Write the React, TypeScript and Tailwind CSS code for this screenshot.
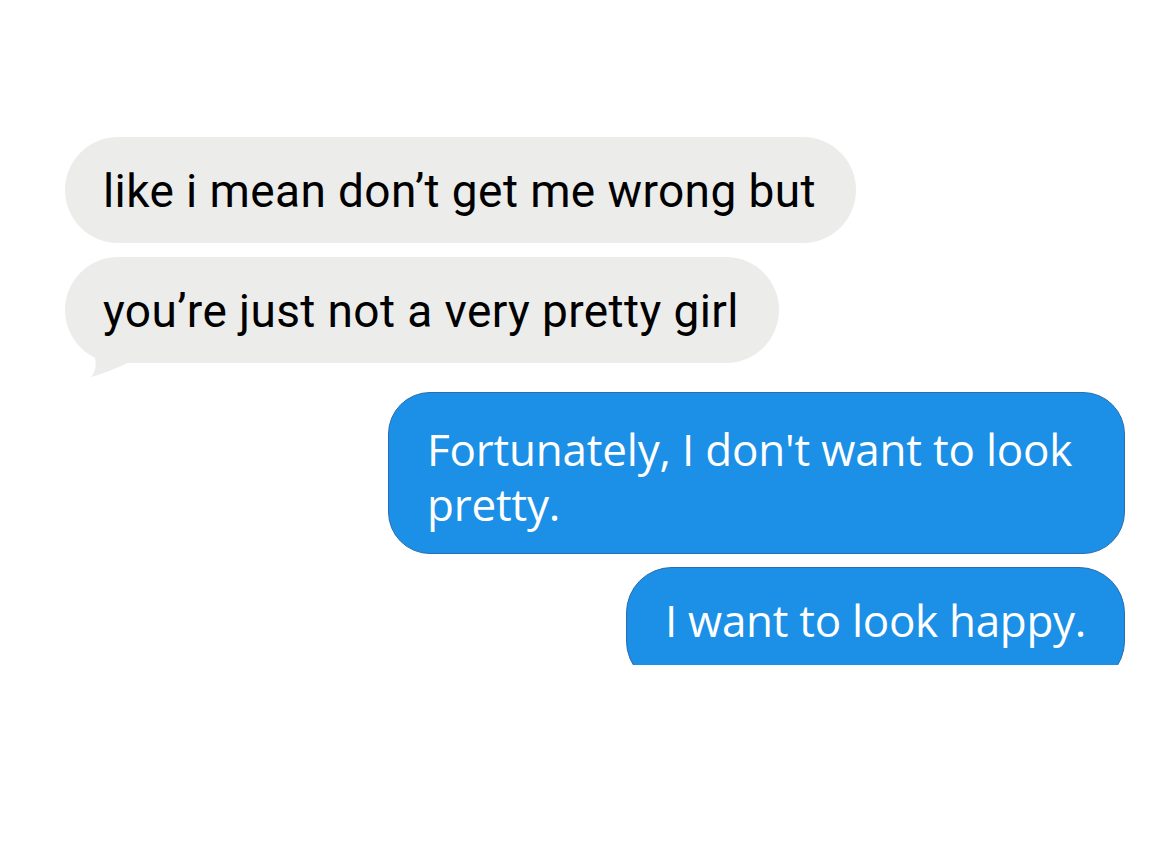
import React from 'react';

const grayFont = { fontFamily: 'Roboto, "Liberation Sans", sans-serif' };
const blueFont = { fontFamily: '"Open Sans", "Liberation Sans", sans-serif' };

const GrayBubble: React.FC<{ text: string; tail?: boolean }> = ({ text, tail }) => (
  <div className="relative self-start">
    <div className="h-[106px] flex items-center pt-[3px] pl-[38px] pr-[40px] rounded-full bg-[#ececea] text-black text-[46px] tracking-[0.4px]">
      {text}
    </div>
    {tail && (
      <svg className="absolute left-[18px] bottom-[-14px]" width="60" height="40" viewBox="0 0 60 40">
        <path d="M4 0 C10 14 18 28 8 40 C24 36 40 28 58 20 L40 0 Z" fill="#ececea" />
      </svg>
    )}
  </div>
);

const App: React.FC = () => {
  return (
    <div className="w-[1170px] h-[852px] bg-white overflow-hidden" style={grayFont}>
      <div className="flex flex-col pt-[137px] pl-[65px] pr-[45px]">
        <GrayBubble text="like i mean don’t get me wrong but" />
        <div className="h-[14px]" />
        <GrayBubble text="you’re just not a very pretty girl" tail />

        {/* sent messages */}
        <div
          className="self-end mt-[29px] w-[737px] h-[162px] rounded-[42px] bg-[#1c90e6] border-[1.5px] border-[#2a6db0] pl-[38px] pr-[20px] pt-[29px] text-white text-[44px] leading-[55px] tracking-[-0.2px]"
          style={blueFont}
        >
          Fortunately, I don't want to look pretty.
        </div>
        <div className="self-end mt-[13px] h-[98px] overflow-hidden">
          <div
            className="w-[499px] h-[120px] rounded-[46px] bg-[#1c90e6] border-[1.5px] border-[#2a6db0] pl-[38px] pt-[26px] text-white text-[44px] leading-[53px] tracking-[-0.3px] whitespace-nowrap"
            style={blueFont}
          >
            I want to look happy.
          </div>
        </div>
      </div>
    </div>
  );
};

export default App;
